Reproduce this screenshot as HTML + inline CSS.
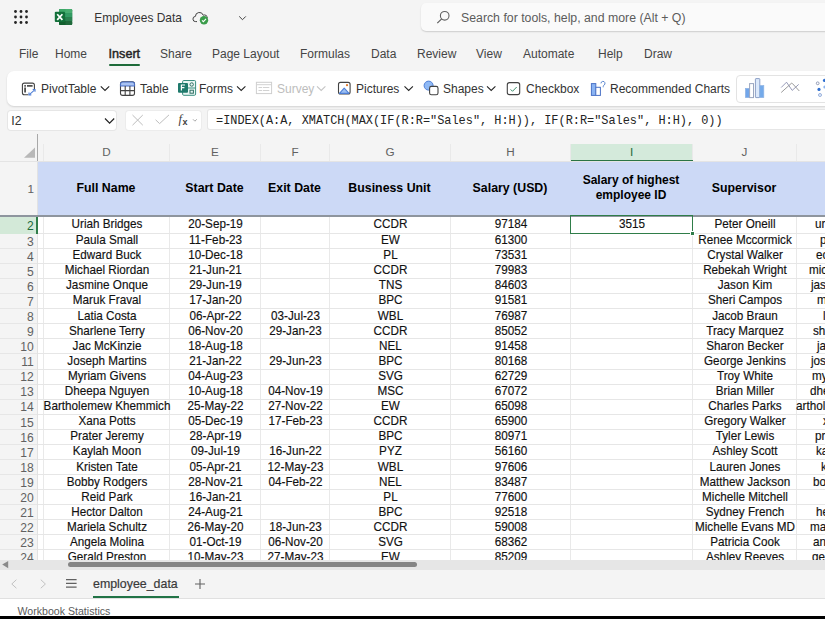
<!DOCTYPE html>
<html><head><meta charset="utf-8"><style>
*{margin:0;padding:0;box-sizing:border-box}
html,body{width:825px;height:619px;overflow:hidden;background:#f4f4f4;font-family:"Liberation Sans",sans-serif;color:#242424}
.a{position:absolute}
.t{position:absolute;white-space:nowrap;font-size:12px;line-height:14px}
#title{left:94.3px;top:11px;font-size:11.95px;color:#333}
.menu{top:46.6px;font-size:12px;color:#454545}
#ribbon{position:absolute;left:7px;top:71px;width:830px;height:35px;background:#fff;border-radius:7px;box-shadow:0 1px 2px rgba(0,0,0,.14)}
.rb{top:82px;font-size:12px;color:#333}
#namebox{position:absolute;left:7.5px;top:110.5px;width:108.5px;height:19px;background:#fff;border-radius:3px;box-shadow:0 0 0 1px #e6e6e6}
#fnbox{position:absolute;left:125.5px;top:110.5px;width:75px;height:19px;background:#fff;border-radius:3px;box-shadow:0 0 0 1px #ececec}
#fbox{position:absolute;left:208px;top:110.3px;width:640px;height:19.2px;background:#fff;border-radius:2px;box-shadow:0 0 0 1px #e6e6e6}
#formula{left:216px;top:114px;font-family:"Liberation Mono",monospace;font-size:11.9px;color:#242424}
#grid{position:absolute;left:0;top:0;width:825px;height:619px}
.ch{position:absolute;top:144px;height:17px;line-height:15.6px;text-align:center;font-size:11.7px;color:#616161;border-left:1px solid #e9e9e9}
.ch.sel{background:#d4eadb;border-bottom:1.8px solid #1e6b3a;color:#1e6b3a;height:17.5px}
.vl{position:absolute;top:216px;height:344px;width:1px;background:#e9e9e9}
.hl{position:absolute;left:0;width:825px;height:1px;background:#e6e6e6}
.rh{position:absolute;left:0;width:37px}
.rh.sel{background:#d3e9d8;border-right:1.5px solid #217346}
.rn{position:absolute;left:0;width:33.8px;text-align:right;font-size:12.1px;line-height:13px;color:#616161}
.c{position:absolute;text-align:center;white-space:nowrap;font-size:12.2px;line-height:13px;height:15px;color:#111;transform:scaleX(0.96);-webkit-text-stroke:0.15px #111}
.c.k{transform-origin:0 50%}
.k{overflow:visible}
#search{position:absolute;left:421px;top:3px;width:420px;height:28px;background:#fafafa;border-radius:5px;box-shadow:0 1px 1.5px rgba(0,0,0,.16)}
#stext{left:461px;top:11px;font-size:12.3px;color:#5c5c5c}
#gallery{position:absolute;left:736px;top:74.5px;width:100px;height:28px;border:1px solid #e3e3e3;border-radius:4px;background:#fff}
.hd{position:absolute;top:160.8px;height:54px;line-height:54px;text-align:center;font-weight:bold;font-size:12.35px;color:#000;white-space:nowrap}
.hd2{position:absolute;top:173.1px;line-height:15px;text-align:center;font-weight:bold;font-size:12px;color:#000;white-space:nowrap}
.rn.g{color:#1e6b3a}

</style></head><body>
<!-- title bar -->
<svg class="a" style="left:0;top:0" width="825" height="38">
  <g fill="#242424">
    <circle cx="15.5" cy="11.5" r="1.4"/><circle cx="21" cy="11.5" r="1.4"/><circle cx="26.5" cy="11.5" r="1.4"/>
    <circle cx="15.5" cy="17" r="1.4"/><circle cx="21" cy="17" r="1.4"/><circle cx="26.5" cy="17" r="1.4"/>
    <circle cx="15.5" cy="22.5" r="1.4"/><circle cx="21" cy="22.5" r="1.4"/><circle cx="26.5" cy="22.5" r="1.4"/>
  </g>
  <rect x="59" y="9" width="13.2" height="16" rx="1.2" fill="#1d7a44"/>
  <rect x="59" y="9" width="13.2" height="4.2" rx="1" fill="#3da868"/>
  <rect x="59" y="13.1" width="13.2" height="4" fill="#27955a"/>
  <rect x="59" y="17.1" width="13.2" height="4" fill="#1c7a45"/>
  <rect x="59" y="21" width="13.2" height="4" rx="1" fill="#13602f"/>
  <rect x="65.5" y="9" width="6.7" height="16" fill="#ffffff" opacity=".06"/>
  <rect x="54.8" y="11.7" width="10.2" height="10.3" rx="1" fill="#13703a"/>
  <path d="M57.2 14.2 L62.4 19.9 M62.4 14.2 L57.2 19.9" stroke="#fff" stroke-width="1.7"/>
  <!-- cloud -->
  <path d="M197 21.6 h-1.3 a2.6 2.6 0 0 1 -0.3 -5.2 a4 4 0 0 1 7.8 -1.2 a3 3 0 0 1 4.2 2.6" fill="none" stroke="#424242" stroke-width="1"/>
  <circle cx="204" cy="20.2" r="4.2" fill="#3a9c4a"/>
  <path d="M202 20.3 l1.4 1.4 l2.6 -2.8" fill="none" stroke="#fff" stroke-width="1.1"/>
  <path d="M239.2 16.4 l3.3 3.3 l3.3 -3.3" fill="none" stroke="#424242" stroke-width="1"/>
</svg>
<div class="t" id="title">Employees Data</div>
<div id="search"></div>
<svg class="a" style="left:430px;top:6px" width="24" height="22">
  <circle cx="14.7" cy="9.8" r="4.3" fill="none" stroke="#616161" stroke-width="1.1"/>
  <path d="M11.7 12.8 L7.3 17.2" stroke="#616161" stroke-width="1.2"/>
</svg>
<div class="t" id="stext">Search for tools, help, and more (Alt + Q)</div>
<!-- menu -->
<div class="t menu" style="left:19px">File</div>
<div class="t menu" style="left:55px">Home</div>
<div class="t menu" style="left:108.6px;top:46.6px;font-size:12.6px;color:#242424;-webkit-text-stroke:0.45px #242424">Insert</div>
<div class="a" style="left:108.5px;top:63.6px;width:31px;height:2px;background:#1e6b3a;border-radius:1px"></div>
<div class="t menu" style="left:160px">Share</div>
<div class="t menu" style="left:212px">Page Layout</div>
<div class="t menu" style="left:300px">Formulas</div>
<div class="t menu" style="left:371px">Data</div>
<div class="t menu" style="left:417px">Review</div>
<div class="t menu" style="left:476px">View</div>
<div class="t menu" style="left:523px">Automate</div>
<div class="t menu" style="left:598px">Help</div>
<div class="t menu" style="left:644px">Draw</div>
<!-- ribbon -->
<div id="ribbon"></div>
<div id="gallery"></div>
<svg class="a" style="left:0;top:70px" width="825" height="36">
  <g transform="translate(0,-70)">
  <!-- pivot -->
  <path d="M34.4 89 v-3.9 a2 2 0 0 0 -2 -2 h-8 a2 2 0 0 0 -2 2 v7.6 a2 2 0 0 0 2 2 h4" fill="none" stroke="#424242" stroke-width="1.1"/>
  <path d="M24.3 85.8 h1.6 M27 85.8 h5.6 M25.1 87.6 v4.8" stroke="#505050" stroke-width="1.8"/>
  <path d="M29.6 94.3 l4.8 -4.2" fill="none" stroke="#4f7fd6" stroke-width="1.1"/>
  <path d="M29 92.6 v2.3 h2.3 M35 91.8 v-2.3 h-2.3" fill="none" stroke="#4f7fd6" stroke-width="1.1"/>
  <path d="M100.8 86.3 l4.2 4.1 l4.2 -4.1" fill="none" stroke="#242424" stroke-width="1.1"/>
  <!-- table -->
  <rect x="120.5" y="81.8" width="14" height="13.6" rx="2.2" fill="none" stroke="#424242" stroke-width="1.1"/>
  <path d="M120.5 86 v-1.8 a2.2 2.2 0 0 1 2.2 -2.2 h9.6 a2.2 2.2 0 0 1 2.2 2.2 v1.8 z" fill="#a9c3f2" stroke="#4a6fc4" stroke-width="1.1"/>
  <path d="M120.5 90.6 h14 M125.2 86 v9.4 M129.9 86 v9.4" stroke="#424242" stroke-width="1.1"/>
  <!-- forms -->
  <rect x="182.6" y="80.5" width="13" height="14.8" rx="1.2" fill="#e9f6f3" stroke="#3b8f80" stroke-width="1"/>
  <path d="M188 88 h7.5" stroke="#3b8f80" stroke-width="1"/>
  <circle cx="191.7" cy="84.5" r="1.7" fill="none" stroke="#2f6f64" stroke-width="1"/>
  <rect x="190" y="90.2" width="3.4" height="3" fill="none" stroke="#2f6f64" stroke-width="1"/>
  <rect x="178" y="82.9" width="10" height="9.9" rx="1" fill="#1f7a6c"/>
  <path d="M181.4 90.5 v-5.5 h3.6 M181.4 87.6 h3" fill="none" stroke="#fff" stroke-width="1.2"/>
  <path d="M237 86.3 l4.2 4.1 l4.2 -4.1" fill="none" stroke="#242424" stroke-width="1.1"/>
  <!-- survey -->
  <rect x="256.4" y="82.3" width="15.2" height="11.3" fill="none" stroke="#cfcfcf" stroke-width="1"/>
  <path d="M256.4 84.7 h15.2 M258.5 87.5 h3.5 M262.8 87.5 h6.5 M258.5 90.5 h3.5 M262.8 90.5 h6.5" stroke="#d2d2d2" stroke-width="1"/>
  <path d="M317 86.3 l4.2 4.1 l4.2 -4.1" fill="none" stroke="#c4c4c4" stroke-width="1.1"/>
  <!-- pictures -->
  <rect x="338.5" y="82.4" width="11.6" height="11.5" rx="2" fill="none" stroke="#424242" stroke-width="1.1"/>
  <path d="M339.5 93.4 L344.2 88.2 L349 93.4 Z" fill="#9cc0f3" stroke="#4f7fd6" stroke-width="1.1" stroke-linejoin="round"/>
  <circle cx="347" cy="85.2" r="1.1" fill="#e07a2c"/>
  <path d="M404.5 86.3 l4.2 4.1 l4.2 -4.1" fill="none" stroke="#242424" stroke-width="1.1"/>
  <!-- shapes -->
  <circle cx="428.6" cy="85.6" r="4.5" fill="#8fb9f5" stroke="#4f7fd6" stroke-width="1"/>
  <rect x="429.6" y="86.4" width="8.4" height="8.4" rx="1.8" fill="#fff" stroke="#424242" stroke-width="1.1"/>
  <path d="M487 86.3 l4.2 4.1 l4.2 -4.1" fill="none" stroke="#242424" stroke-width="1.1"/>
  <!-- checkbox -->
  <rect x="507.3" y="82.6" width="12.4" height="12" rx="2.2" fill="none" stroke="#424242" stroke-width="1.1"/>
  <path d="M510.6 89.4 l1.9 1.9 l4.2 -4.3" fill="none" stroke="#3b8f6a" stroke-width="1"/>
  <!-- rec charts -->
  <rect x="591.4" y="83.6" width="4.4" height="11.8" fill="#8ab4f3" stroke="#4a72c6" stroke-width="1"/>
  <rect x="595.8" y="87.3" width="4.6" height="8.1" fill="#fff" stroke="#4a72c6" stroke-width="1"/>
  <path d="M601 83.4 a2 2 0 1 1 3 1.7 q-0.8 0.6 -0.8 1.6 v0.6" fill="none" stroke="#5a86d0" stroke-width="1"/>
  <!-- gallery bar chart -->
  <rect x="745.4" y="88.4" width="4.4" height="9.2" fill="#72a6ea" stroke="#8fb3e3" stroke-width=".7"/>
  <rect x="749.6" y="83.6" width="3.9" height="14" fill="#fff" stroke="#9aa6c0" stroke-width="1"/>
  <rect x="755.4" y="78.6" width="4.4" height="19" rx=".6" fill="#dce9fb" stroke="#8c9fc6" stroke-width="1"/>
  <rect x="759.8" y="85.6" width="4" height="12" fill="#74aaea" stroke="#8fb3e3" stroke-width=".7"/>
  <!-- line chart -->
  <path d="M781.2 87.5 L786.5 82.2 L792.2 90.4 L798.7 84.4" fill="none" stroke="#8a8fb0" stroke-width=".9"/>
  <path d="M781.2 92.5 L791.3 83.4 Q791.9 82.9 792.4 83.5 L799.3 91" fill="none" stroke="#8f8f8f" stroke-width=".9"/>
  <!-- scatter -->
  <circle cx="817.7" cy="83.3" r="1.4" fill="#fff" stroke="#8a94b0" stroke-width=".9"/>
  <circle cx="819" cy="89.4" r="1.6" fill="#2f6fd0"/>
  <circle cx="820" cy="95" r="1.5" fill="#e8f0fb" stroke="#8fa8d8" stroke-width=".9"/>
  <circle cx="824.6" cy="80.4" r="1.7" fill="#2f6fd0"/>
  <circle cx="824.8" cy="87" r="1.5" fill="#8cb4ee"/>
  </g>
</svg>
<div class="t rb" style="left:41px">PivotTable</div>
<div class="t rb" style="left:140px">Table</div>
<div class="t rb" style="left:199px">Forms</div>
<div class="t rb" style="left:277px;color:#bdbdbd">Survey</div>
<div class="t rb" style="left:356px">Pictures</div>
<div class="t rb" style="left:443px">Shapes</div>
<div class="t rb" style="left:526px">Checkbox</div>
<div class="t rb" style="left:610px">Recommended Charts</div>
<!-- formula bar -->
<div id="namebox"></div>
<div class="t" style="left:11.3px;top:114px;font-size:12.3px;color:#333">I2</div>
<div id="fnbox"></div>
<svg class="a" style="left:0;top:104px" width="210" height="30">
  <g transform="translate(0,-104)">
  <path d="M105 118.5 l4.6 4.6 l4.6 -4.6" fill="none" stroke="#242424" stroke-width="1.2"/>
  <path d="M132.5 115 L142.8 125.2 M142.8 115 L132.5 125.2" stroke="#bdbdbd" stroke-width="1"/>
  <path d="M155.6 119.8 L159.6 123.6 L169 114.9" fill="none" stroke="#bdbdbd" stroke-width="1"/>
  <path d="M193 119.3 l1.9 1.9 l1.9 -1.9" fill="none" stroke="#9e9e9e" stroke-width=".9"/>
  </g>
</svg>
<div class="t" style="left:178.5px;top:112px;font-family:'Liberation Serif',serif;font-style:italic;font-size:12.5px;color:#424242">f</div>
<div class="t" style="left:182.5px;top:114.5px;font-family:'Liberation Sans',sans-serif;font-size:9px;font-weight:bold;color:#424242">x</div>
<div id="fbox"></div>
<div class="t" id="formula">=INDEX(A:A, XMATCH(MAX(IF(R:R="Sales", H:H)), IF(R:R="Sales", H:H), 0))</div>
<!-- sheet backgrounds -->
<div class="a" style="left:37px;top:161px;width:788px;height:55px;background:#ccd9f6"></div>
<div class="a" style="left:37px;top:216px;width:788px;height:344px;background:#fff"></div>
<div class="a" style="left:0;top:161px;width:37px;height:399px;background:#f4f4f4"></div>

<div id="grid">
<div class="ch" style="left:43px;width:126px">D</div>
<div class="ch" style="left:169px;width:91px">E</div>
<div class="ch" style="left:260px;width:69px">F</div>
<div class="ch" style="left:329px;width:121px">G</div>
<div class="ch" style="left:450px;width:120px">H</div>
<div class="ch sel" style="left:570px;width:122px">I</div>
<div class="ch" style="left:692px;width:104px">J</div>
<div class="ch" style="left:796px;width:104px">K</div>
<div class="vl" style="left:43px"></div>
<div class="vl" style="left:169px"></div>
<div class="vl" style="left:260px"></div>
<div class="vl" style="left:329px"></div>
<div class="vl" style="left:450px"></div>
<div class="vl" style="left:570px"></div>
<div class="vl" style="left:692px"></div>
<div class="vl" style="left:796px"></div>
<div class="vl" style="left:43px"></div>
<div class="hl" style="top:233.00px"></div>
<div class="hl" style="top:248.06px"></div>
<div class="hl" style="top:263.12px"></div>
<div class="hl" style="top:278.18px"></div>
<div class="hl" style="top:293.24px"></div>
<div class="hl" style="top:308.30px"></div>
<div class="hl" style="top:323.36px"></div>
<div class="hl" style="top:338.42px"></div>
<div class="hl" style="top:353.48px"></div>
<div class="hl" style="top:368.54px"></div>
<div class="hl" style="top:383.60px"></div>
<div class="hl" style="top:398.66px"></div>
<div class="hl" style="top:413.72px"></div>
<div class="hl" style="top:428.78px"></div>
<div class="hl" style="top:443.84px"></div>
<div class="hl" style="top:458.90px"></div>
<div class="hl" style="top:473.96px"></div>
<div class="hl" style="top:489.02px"></div>
<div class="hl" style="top:504.08px"></div>
<div class="hl" style="top:519.14px"></div>
<div class="hl" style="top:534.20px"></div>
<div class="hl" style="top:549.26px"></div>
<div class="rh sel" style="top:216.50px;height:17.00px"></div>
<div class="rn g" style="top:219.80px">2</div>
<div class="rh" style="top:233.50px;height:15.06px"></div>
<div class="rn" style="top:235.83px">3</div>
<div class="rh" style="top:248.56px;height:15.06px"></div>
<div class="rn" style="top:250.89px">4</div>
<div class="rh" style="top:263.62px;height:15.06px"></div>
<div class="rn" style="top:265.95px">5</div>
<div class="rh" style="top:278.68px;height:15.06px"></div>
<div class="rn" style="top:281.01px">6</div>
<div class="rh" style="top:293.74px;height:15.06px"></div>
<div class="rn" style="top:296.07px">7</div>
<div class="rh" style="top:308.80px;height:15.06px"></div>
<div class="rn" style="top:311.13px">8</div>
<div class="rh" style="top:323.86px;height:15.06px"></div>
<div class="rn" style="top:326.19px">9</div>
<div class="rh" style="top:338.92px;height:15.06px"></div>
<div class="rn" style="top:341.25px">10</div>
<div class="rh" style="top:353.98px;height:15.06px"></div>
<div class="rn" style="top:356.31px">11</div>
<div class="rh" style="top:369.04px;height:15.06px"></div>
<div class="rn" style="top:371.37px">12</div>
<div class="rh" style="top:384.10px;height:15.06px"></div>
<div class="rn" style="top:386.43px">13</div>
<div class="rh" style="top:399.16px;height:15.06px"></div>
<div class="rn" style="top:401.49px">14</div>
<div class="rh" style="top:414.22px;height:15.06px"></div>
<div class="rn" style="top:416.55px">15</div>
<div class="rh" style="top:429.28px;height:15.06px"></div>
<div class="rn" style="top:431.61px">16</div>
<div class="rh" style="top:444.34px;height:15.06px"></div>
<div class="rn" style="top:446.67px">17</div>
<div class="rh" style="top:459.40px;height:15.06px"></div>
<div class="rn" style="top:461.73px">18</div>
<div class="rh" style="top:474.46px;height:15.06px"></div>
<div class="rn" style="top:476.79px">19</div>
<div class="rh" style="top:489.52px;height:15.06px"></div>
<div class="rn" style="top:491.85px">20</div>
<div class="rh" style="top:504.58px;height:15.06px"></div>
<div class="rn" style="top:506.91px">21</div>
<div class="rh" style="top:519.64px;height:15.06px"></div>
<div class="rn" style="top:521.97px">22</div>
<div class="rh" style="top:534.70px;height:15.06px"></div>
<div class="rn" style="top:537.03px">23</div>
<div class="rh" style="top:549.76px;height:15.06px"></div>
<div class="rn" style="top:552.09px">24</div>
<div class="c" style="left:-16.4px;width:246px;top:217.50px">Uriah Bridges</div>
<div class="c" style="left:109.6px;width:211px;top:217.50px">20-Sep-19</div>
<div class="c" style="left:269.6px;width:241px;top:217.50px">CCDR</div>
<div class="c" style="left:390.6px;width:240px;top:217.50px">97184</div>
<div class="c" style="left:510.6px;width:242px;top:217.50px">3515</div>
<div class="c" style="left:632.6px;width:224px;top:217.50px">Peter Oneill</div>
<div class="c k" style="left:815.2px;top:217.50px">ur</div>
<div class="c" style="left:-16.4px;width:246px;top:234.00px">Paula Small</div>
<div class="c" style="left:109.6px;width:211px;top:234.00px">11-Feb-23</div>
<div class="c" style="left:269.6px;width:241px;top:234.00px">EW</div>
<div class="c" style="left:390.6px;width:240px;top:234.00px">61300</div>
<div class="c" style="left:632.6px;width:224px;top:234.00px">Renee Mccormick</div>
<div class="c k" style="left:820.1px;top:234.00px">p</div>
<div class="c" style="left:-16.4px;width:246px;top:249.10px">Edward Buck</div>
<div class="c" style="left:109.6px;width:211px;top:249.10px">10-Dec-18</div>
<div class="c" style="left:269.6px;width:241px;top:249.10px">PL</div>
<div class="c" style="left:390.6px;width:240px;top:249.10px">73531</div>
<div class="c" style="left:632.6px;width:224px;top:249.10px">Crystal Walker</div>
<div class="c k" style="left:815.9px;top:249.10px">ec</div>
<div class="c" style="left:-16.4px;width:246px;top:264.20px">Michael Riordan</div>
<div class="c" style="left:109.6px;width:211px;top:264.20px">21-Jun-21</div>
<div class="c" style="left:269.6px;width:241px;top:264.20px">CCDR</div>
<div class="c" style="left:390.6px;width:240px;top:264.20px">79983</div>
<div class="c" style="left:632.6px;width:224px;top:264.20px">Rebekah Wright</div>
<div class="c k" style="left:809.0px;top:264.20px">mic</div>
<div class="c" style="left:-16.4px;width:246px;top:279.30px">Jasmine Onque</div>
<div class="c" style="left:109.6px;width:211px;top:279.30px">29-Jun-19</div>
<div class="c" style="left:269.6px;width:241px;top:279.30px">TNS</div>
<div class="c" style="left:390.6px;width:240px;top:279.30px">84603</div>
<div class="c" style="left:632.6px;width:224px;top:279.30px">Jason Kim</div>
<div class="c k" style="left:811.1px;top:279.30px">jas</div>
<div class="c" style="left:-16.4px;width:246px;top:294.40px">Maruk Fraval</div>
<div class="c" style="left:109.6px;width:211px;top:294.40px">17-Jan-20</div>
<div class="c" style="left:269.6px;width:241px;top:294.40px">BPC</div>
<div class="c" style="left:390.6px;width:240px;top:294.40px">91581</div>
<div class="c" style="left:632.6px;width:224px;top:294.40px">Sheri Campos</div>
<div class="c k" style="left:817.4px;top:294.40px">m</div>
<div class="c" style="left:-16.4px;width:246px;top:309.50px">Latia Costa</div>
<div class="c" style="left:109.6px;width:211px;top:309.50px">06-Apr-22</div>
<div class="c" style="left:200.60000000000002px;width:189px;top:309.50px">03-Jul-23</div>
<div class="c" style="left:269.6px;width:241px;top:309.50px">WBL</div>
<div class="c" style="left:390.6px;width:240px;top:309.50px">76987</div>
<div class="c" style="left:632.6px;width:224px;top:309.50px">Jacob Braun</div>
<div class="c k" style="left:822.8px;top:309.50px">l</div>
<div class="c" style="left:-16.4px;width:246px;top:324.60px">Sharlene Terry</div>
<div class="c" style="left:109.6px;width:211px;top:324.60px">06-Nov-20</div>
<div class="c" style="left:200.60000000000002px;width:189px;top:324.60px">29-Jan-23</div>
<div class="c" style="left:269.6px;width:241px;top:324.60px">CCDR</div>
<div class="c" style="left:390.6px;width:240px;top:324.60px">85052</div>
<div class="c" style="left:632.6px;width:224px;top:324.60px">Tracy Marquez</div>
<div class="c k" style="left:813.0px;top:324.60px">sh</div>
<div class="c" style="left:-16.4px;width:246px;top:339.70px">Jac McKinzie</div>
<div class="c" style="left:109.6px;width:211px;top:339.70px">18-Aug-18</div>
<div class="c" style="left:269.6px;width:241px;top:339.70px">NEL</div>
<div class="c" style="left:390.6px;width:240px;top:339.70px">91458</div>
<div class="c" style="left:632.6px;width:224px;top:339.70px">Sharon Becker</div>
<div class="c k" style="left:817.1px;top:339.70px">ja</div>
<div class="c" style="left:-16.4px;width:246px;top:354.80px">Joseph Martins</div>
<div class="c" style="left:109.6px;width:211px;top:354.80px">21-Jan-22</div>
<div class="c" style="left:200.60000000000002px;width:189px;top:354.80px">29-Jun-23</div>
<div class="c" style="left:269.6px;width:241px;top:354.80px">BPC</div>
<div class="c" style="left:390.6px;width:240px;top:354.80px">80168</div>
<div class="c" style="left:632.6px;width:224px;top:354.80px">George Jenkins</div>
<div class="c k" style="left:811.4px;top:354.80px">jos</div>
<div class="c" style="left:-16.4px;width:246px;top:369.90px">Myriam Givens</div>
<div class="c" style="left:109.6px;width:211px;top:369.90px">04-Aug-23</div>
<div class="c" style="left:269.6px;width:241px;top:369.90px">SVG</div>
<div class="c" style="left:390.6px;width:240px;top:369.90px">62729</div>
<div class="c" style="left:632.6px;width:224px;top:369.90px">Troy White</div>
<div class="c k" style="left:812.2px;top:369.90px">my</div>
<div class="c" style="left:-16.4px;width:246px;top:385.00px">Dheepa Nguyen</div>
<div class="c" style="left:109.6px;width:211px;top:385.00px">10-Aug-18</div>
<div class="c" style="left:200.60000000000002px;width:189px;top:385.00px">04-Nov-19</div>
<div class="c" style="left:269.6px;width:241px;top:385.00px">MSC</div>
<div class="c" style="left:390.6px;width:240px;top:385.00px">67072</div>
<div class="c" style="left:632.6px;width:224px;top:385.00px">Brian Miller</div>
<div class="c k" style="left:809.5px;top:385.00px">dhe</div>
<div class="c" style="left:-16.4px;width:246px;top:400.10px">Bartholemew Khemmich</div>
<div class="c" style="left:109.6px;width:211px;top:400.10px">25-May-22</div>
<div class="c" style="left:200.60000000000002px;width:189px;top:400.10px">27-Nov-22</div>
<div class="c" style="left:269.6px;width:241px;top:400.10px">EW</div>
<div class="c" style="left:390.6px;width:240px;top:400.10px">65098</div>
<div class="c" style="left:632.6px;width:224px;top:400.10px">Charles Parks</div>
<div class="c k" style="left:795.7px;top:400.10px">artholo</div>
<div class="c" style="left:-16.4px;width:246px;top:415.20px">Xana Potts</div>
<div class="c" style="left:109.6px;width:211px;top:415.20px">05-Dec-19</div>
<div class="c" style="left:200.60000000000002px;width:189px;top:415.20px">17-Feb-23</div>
<div class="c" style="left:269.6px;width:241px;top:415.20px">CCDR</div>
<div class="c" style="left:390.6px;width:240px;top:415.20px">65900</div>
<div class="c" style="left:632.6px;width:224px;top:415.20px">Gregory Walker</div>
<div class="c k" style="left:822.6px;top:415.20px">x</div>
<div class="c" style="left:-16.4px;width:246px;top:430.30px">Prater Jeremy</div>
<div class="c" style="left:109.6px;width:211px;top:430.30px">28-Apr-19</div>
<div class="c" style="left:269.6px;width:241px;top:430.30px">BPC</div>
<div class="c" style="left:390.6px;width:240px;top:430.30px">80971</div>
<div class="c" style="left:632.6px;width:224px;top:430.30px">Tyler Lewis</div>
<div class="c k" style="left:815.0px;top:430.30px">pr</div>
<div class="c" style="left:-16.4px;width:246px;top:445.40px">Kaylah Moon</div>
<div class="c" style="left:109.6px;width:211px;top:445.40px">09-Jul-19</div>
<div class="c" style="left:200.60000000000002px;width:189px;top:445.40px">16-Jun-22</div>
<div class="c" style="left:269.6px;width:241px;top:445.40px">PYZ</div>
<div class="c" style="left:390.6px;width:240px;top:445.40px">56160</div>
<div class="c" style="left:632.6px;width:224px;top:445.40px">Ashley Scott</div>
<div class="c k" style="left:815.7px;top:445.40px">ka</div>
<div class="c" style="left:-16.4px;width:246px;top:460.50px">Kristen Tate</div>
<div class="c" style="left:109.6px;width:211px;top:460.50px">05-Apr-21</div>
<div class="c" style="left:200.60000000000002px;width:189px;top:460.50px">12-May-23</div>
<div class="c" style="left:269.6px;width:241px;top:460.50px">WBL</div>
<div class="c" style="left:390.6px;width:240px;top:460.50px">97606</div>
<div class="c" style="left:632.6px;width:224px;top:460.50px">Lauren Jones</div>
<div class="c k" style="left:821.2px;top:460.50px">k</div>
<div class="c" style="left:-16.4px;width:246px;top:475.60px">Bobby Rodgers</div>
<div class="c" style="left:109.6px;width:211px;top:475.60px">28-Nov-21</div>
<div class="c" style="left:200.60000000000002px;width:189px;top:475.60px">04-Feb-22</div>
<div class="c" style="left:269.6px;width:241px;top:475.60px">NEL</div>
<div class="c" style="left:390.6px;width:240px;top:475.60px">83487</div>
<div class="c" style="left:632.6px;width:224px;top:475.60px">Matthew Jackson</div>
<div class="c k" style="left:813.0px;top:475.60px">bo</div>
<div class="c" style="left:-16.4px;width:246px;top:490.70px">Reid Park</div>
<div class="c" style="left:109.6px;width:211px;top:490.70px">16-Jan-21</div>
<div class="c" style="left:269.6px;width:241px;top:490.70px">PL</div>
<div class="c" style="left:390.6px;width:240px;top:490.70px">77600</div>
<div class="c" style="left:632.6px;width:224px;top:490.70px">Michelle Mitchell</div>
<div class="c" style="left:-16.4px;width:246px;top:505.80px">Hector Dalton</div>
<div class="c" style="left:109.6px;width:211px;top:505.80px">24-Aug-21</div>
<div class="c" style="left:269.6px;width:241px;top:505.80px">BPC</div>
<div class="c" style="left:390.6px;width:240px;top:505.80px">92518</div>
<div class="c" style="left:632.6px;width:224px;top:505.80px">Sydney French</div>
<div class="c k" style="left:815.7px;top:505.80px">he</div>
<div class="c" style="left:-16.4px;width:246px;top:520.90px">Mariela Schultz</div>
<div class="c" style="left:109.6px;width:211px;top:520.90px">26-May-20</div>
<div class="c" style="left:200.60000000000002px;width:189px;top:520.90px">18-Jun-23</div>
<div class="c" style="left:269.6px;width:241px;top:520.90px">CCDR</div>
<div class="c" style="left:390.6px;width:240px;top:520.90px">59008</div>
<div class="c" style="left:632.6px;width:224px;top:520.90px">Michelle Evans MD</div>
<div class="c k" style="left:810.2px;top:520.90px">ma</div>
<div class="c" style="left:-16.4px;width:246px;top:536.00px">Angela Molina</div>
<div class="c" style="left:109.6px;width:211px;top:536.00px">01-Oct-19</div>
<div class="c" style="left:200.60000000000002px;width:189px;top:536.00px">06-Nov-20</div>
<div class="c" style="left:269.6px;width:241px;top:536.00px">SVG</div>
<div class="c" style="left:390.6px;width:240px;top:536.00px">68362</div>
<div class="c" style="left:632.6px;width:224px;top:536.00px">Patricia Cook</div>
<div class="c k" style="left:813.0px;top:536.00px">an</div>
<div class="c" style="left:-16.4px;width:246px;top:551.10px">Gerald Preston</div>
<div class="c" style="left:109.6px;width:211px;top:551.10px">10-May-23</div>
<div class="c" style="left:200.60000000000002px;width:189px;top:551.10px">27-May-23</div>
<div class="c" style="left:269.6px;width:241px;top:551.10px">EW</div>
<div class="c" style="left:390.6px;width:240px;top:551.10px">85209</div>
<div class="c" style="left:632.6px;width:224px;top:551.10px">Ashley Reeves</div>
<div class="c k" style="left:811.6px;top:551.10px">ge</div><div class="a" style="left:36.5px;top:134px;width:1.3px;height:27px;background:#a8a8a8"></div><div class="a" style="left:36.5px;top:161px;width:1px;height:399px;background:#e2e2e2"></div>
<!-- header row 1 texts -->
<div class="hd" style="left:43px;width:126px">Full Name</div>
<div class="hd" style="left:169px;width:91px">Start Date</div>
<div class="hd" style="left:260px;width:69px">Exit Date</div>
<div class="hd" style="left:329px;width:121px">Business Unit</div>
<div class="hd" style="left:450px;width:120px">Salary (USD)</div>
<div class="hd2" style="left:570px;width:122px">Salary of highest<br>employee ID</div>
<div class="hd" style="left:692px;width:104px">Supervisor</div>
<div class="a" style="left:0;top:161px;width:825px;height:1px;background:#e4e4e4"></div>
<div class="a" style="left:0;top:215px;width:825px;height:1.5px;background:#8e959e"></div>
<div class="a" style="left:570.5px;top:159.6px;width:122px;height:1.9px;background:#2a7445"></div>

<div class="t" style="left:0;width:34px;text-align:right;top:182px;font-size:11.7px;color:#616161">1</div>
<svg class="a" style="left:0;top:140px" width="40" height="22"><path d="M24 17.7 L35 17.7 L35 7.5 Z" fill="#b8b8b8"/></svg>
<div class="a" style="left:36px;top:216.5px;width:1.7px;height:17px;background:#2f7d49"></div>
<!-- selection -->
<div class="a" style="left:570.2px;top:215px;width:122.8px;height:19.2px;border:1.8px solid #2f7d49"></div>
<div class="a" style="left:690.3px;top:231.3px;width:4.6px;height:4.6px;background:#2f7d49;border:0.8px solid #fff"></div>
<!-- scrollbar -->
<div class="a" style="left:0;top:560px;width:825px;height:10px;background:#e6e6e6"></div>
<svg class="a" style="left:0;top:558px" width="12" height="14"><path d="M2.2 6.6 L8.2 3 L8.2 10.2 Z" fill="#8a8a8a"/></svg>
<div class="a" style="left:68px;top:562px;width:349px;height:5.3px;background:#858585;border-radius:3px"></div>
<!-- sheet tabs -->
<div class="a" style="left:0;top:570px;width:825px;height:29px;background:#f4f4f4;border-bottom:1px solid #e0e0e0"></div>
<svg class="a" style="left:0;top:570px" width="220" height="29">
  <g transform="translate(0,-570)">
  <path d="M16.4 579.7 L11.8 584 L16.4 588.2" fill="none" stroke="#c2c2c2" stroke-width="1"/>
  <path d="M40.8 579.7 L45.4 584 L40.8 588.2" fill="none" stroke="#c2c2c2" stroke-width="1"/>
  <path d="M66 579.6 h10.6 M66 583.4 h10.6 M66 587.2 h10.6" stroke="#616161" stroke-width="1.2"/>
  <path d="M195 584 h10 M200 579 v10" stroke="#616161" stroke-width="1.1"/>
  </g>
</svg>
<div class="t" style="left:93px;top:577px;font-size:12.4px;color:#3a3a3a;-webkit-text-stroke:0.2px #3a3a3a">employee_data</div>
<div class="a" style="left:93px;top:595.8px;width:85.5px;height:2.2px;background:#217346"></div>
<!-- status -->
<div class="a" style="left:0;top:599px;width:825px;height:17.5px;background:#fff"></div>
<div class="t" style="left:17.5px;top:603.5px;font-size:10.6px;color:#5a5a5a">Workbook Statistics</div>
<div class="a" style="left:0;top:616.2px;width:825px;height:3px;background:#000"></div>

</div>
</body></html>
